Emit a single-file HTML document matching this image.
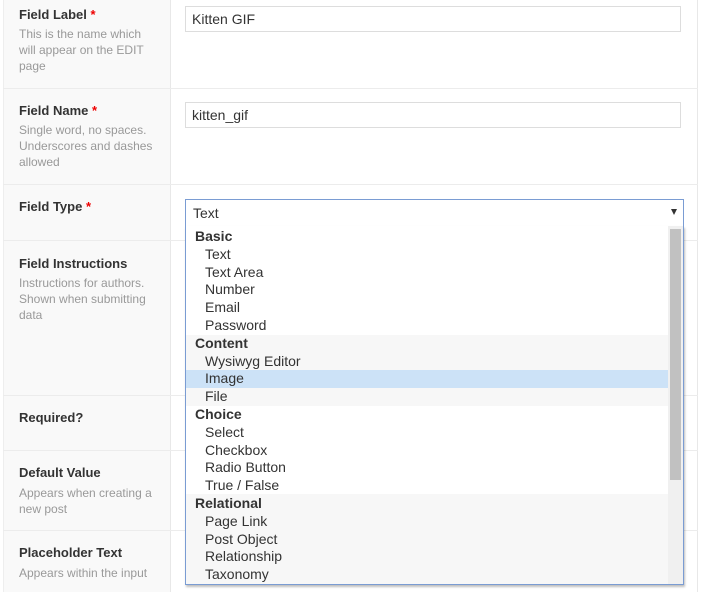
<!DOCTYPE html>
<html><head><style>
body{margin:0;width:703px;height:592px;overflow:hidden;background:#fff;font-family:"Liberation Sans",Arial,sans-serif;position:relative}
.lc{position:absolute;left:3px;top:0;width:166px;height:592px;background:#f9f9f9;border-right:1px solid #e8e8e8;border-left:1px solid #eee}
.rb{position:absolute;left:697px;top:0;width:1px;height:592px;background:#e8e8e8}
.hl{position:absolute;left:3px;width:695px;height:1px;background:#ececec}
.lab{position:absolute;left:19px;font-size:13px;font-weight:bold;color:#333}
.lab b{color:#e00}
.desc{position:absolute;left:19px;width:135px;font-size:12px;line-height:16px;color:#999}
.inp{position:absolute;left:185px;width:496px;height:26px;border:1px solid #ddd;box-sizing:border-box;font-size:14px;color:#333;padding:5px 6px;line-height:15px;background:#fff}
.sel{position:absolute;left:185px;top:199px;width:499px;height:28px;border:1px solid #7a9cd3;box-sizing:border-box;font-size:14px;color:#333;padding:5px 7px;background:#fff}
.arr{position:absolute;right:6px;top:9px;width:0;height:0;border-left:3.5px solid transparent;border-right:3.5px solid transparent;border-top:6px solid #333}
.dd{position:absolute;left:185px;top:226px;width:499px;height:359px;border:1px solid #7a9cd3;border-top:none;box-sizing:border-box;background:#fff;box-shadow:1px 2px 2px rgba(0,0,0,.25);overflow:hidden}
.g{position:absolute;left:0;width:482px}
.it{position:absolute;left:0;width:482px;height:17.8px;font-size:14px;line-height:17.8px;color:#333;padding-left:19px;box-sizing:border-box}
.gh{font-weight:bold;padding-left:9px}
.sb{position:absolute;left:482px;top:0;width:15px;height:359px;background:#f0f0f0}
.th{position:absolute;left:2px;top:3px;width:11px;height:251px;background:#c1c1c1}
</style></head><body>
<div class="lc"></div><div class="rb"></div>
<div class="hl" style="top:88px"></div>
<div class="hl" style="top:184px"></div>
<div class="hl" style="top:240px"></div>
<div class="hl" style="top:395px"></div>
<div class="hl" style="top:450px"></div>
<div class="hl" style="top:530px"></div>

<div class="lab" style="top:7px">Field Label <b>*</b></div>
<div class="desc" style="top:26px">This is the name which will appear on the EDIT page</div>
<div class="lab" style="top:103px">Field Name <b>*</b></div>
<div class="desc" style="top:122px">Single word, no spaces. Underscores and dashes allowed</div>
<div class="lab" style="top:199px">Field Type <b>*</b></div>
<div class="lab" style="top:256px">Field Instructions</div>
<div class="desc" style="top:275px">Instructions for authors. Shown when submitting data</div>
<div class="lab" style="top:410px">Required?</div>
<div class="lab" style="top:465px">Default Value</div>
<div class="desc" style="top:485px">Appears when creating a new post</div>
<div class="lab" style="top:545px">Placeholder Text</div>
<div class="desc" style="top:565px;width:150px">Appears within the input</div>

<div class="inp" style="top:6px">Kitten GIF</div>
<div class="inp" style="top:102px">kitten_gif</div>
<div class="sel">Text<div class="arr"></div></div>
<div class="dd">
<div class="g" style="top:109px;height:71px;background:#f7f7f7"></div>
<div class="g" style="top:268px;height:91px;background:#f7f7f7"></div>
<div class="g" style="top:144px;height:17.8px;background:#cce2f7"></div>
<div class="it gh" style="top:1.5px">Basic</div>
<div class="it" style="top:19.5px">Text</div>
<div class="it" style="top:37.5px">Text Area</div>
<div class="it" style="top:54.5px">Number</div>
<div class="it" style="top:72.5px">Email</div>
<div class="it" style="top:90.5px">Password</div>
<div class="it gh" style="top:108.5px">Content</div>
<div class="it" style="top:126.5px">Wysiwyg Editor</div>
<div class="it" style="top:143.5px">Image</div>
<div class="it" style="top:161.5px">File</div>
<div class="it gh" style="top:179.5px">Choice</div>
<div class="it" style="top:197.5px">Select</div>
<div class="it" style="top:215.5px">Checkbox</div>
<div class="it" style="top:232.5px">Radio Button</div>
<div class="it" style="top:250.5px">True / False</div>
<div class="it gh" style="top:268.5px">Relational</div>
<div class="it" style="top:286.5px">Page Link</div>
<div class="it" style="top:304.5px">Post Object</div>
<div class="it" style="top:321.5px">Relationship</div>
<div class="it" style="top:339.5px">Taxonomy</div>
<div class="sb"><div class="th"></div></div>
</div>
</body></html>
